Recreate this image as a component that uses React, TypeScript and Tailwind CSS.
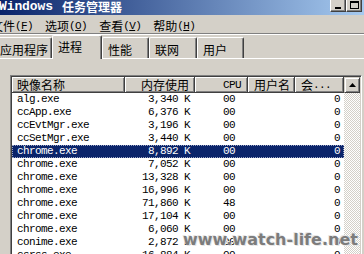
import React from "react";

const MONO = "font-['Liberation_Mono',monospace] text-[11px] tracking-[-0.6px]";

const rows: [string, string, string, string, string][] = [
  ["alg.exe", "3,340 K", "00", "", "0"],
  ["ccApp.exe", "6,376 K", "00", "", "0"],
  ["ccEvtMgr.exe", "3,196 K", "00", "", "0"],
  ["ccSetMgr.exe", "3,440 K", "00", "", "0"],
  ["chrome.exe", "8,892 K", "00", "", "0"],
  ["chrome.exe", "7,052 K", "00", "", "0"],
  ["chrome.exe", "13,328 K", "00", "", "0"],
  ["chrome.exe", "16,996 K", "00", "", "0"],
  ["chrome.exe", "71,860 K", "48", "", "0"],
  ["chrome.exe", "17,104 K", "00", "", "0"],
  ["chrome.exe", "6,060 K", "00", "", "0"],
  ["conime.exe", "2,872 K", "00", "", "0"],
  ["csrss.exe", "16,884 K", "00", "", "0"],
];

function CapBtn({ children }: { children?: React.ReactNode }) {
  return (
    <div className="w-[16px] h-[14px] bg-[#d4d0c8] border border-t-white border-l-white border-r-[#404040] border-b-[#404040] shadow-[inset_-1px_-1px_0_#808080] flex items-center justify-center">
      {children}
    </div>
  );
}

function MenuItem({ label, k }: { label: string; k: string }) {
  return (
    <span className="px-[6px] flex items-center whitespace-nowrap">
      <span>{label}</span>
      <span className={MONO}>
        (<span className="underline">{k}</span>)
      </span>
    </span>
  );
}

function Tab({ label, w, selected }: { label: string; w: string; selected?: boolean }) {
  if (selected) {
    return (
      <div
        className={`${w} h-[24px] mb-[-1px] relative z-10 bg-[#d4d0c8] border-l border-t border-white border-r border-r-[#404040] shadow-[inset_-1px_0_0_#808080] rounded-t-[2px] pl-[5px] pt-[5px] text-[12px] leading-[12px]`}
      >
        {label}
      </div>
    );
  }
  return (
    <div
      className={`${w} h-[21px] border-l border-t border-white border-r border-r-[#404040] shadow-[inset_-1px_0_0_#808080] rounded-t-[2px] pl-[5px] pt-[6px] text-[12px] leading-[12px]`}
    >
      {label}
    </div>
  );
}

const headCell =
  "h-full flex items-center bg-[#d4d0c8] border-r border-b border-[#404040] shadow-[inset_1px_1px_0_#fff,inset_-1px_-1px_0_#808080] text-[12px] leading-[12px] whitespace-nowrap";

export default function App() {
  return (
    <div className="relative w-[364px] h-[254px] overflow-hidden bg-[#d4d0c8] text-black font-['Noto_Sans_CJK_SC',sans-serif]">
      {/* Title bar */}
      <div className="flex h-[15px] bg-[linear-gradient(to_right,#0a246a,#a6caf0)]">
        <div className="flex items-start ml-[-1px] mt-[1px] text-white font-bold leading-[12px] whitespace-nowrap">
          <span className="font-['Liberation_Mono',monospace] text-[13px] tracking-[-0.1px]">Windows</span>
          <span className="ml-[9px] text-[12px]">任务管理器</span>
        </div>
        <div className="ml-auto mr-[-16px] mt-[-2px] flex">
          <CapBtn>
            <div className="w-[6px] h-[2px] bg-black mt-[6px]" />
          </CapBtn>
          <CapBtn>
            <div className="w-[9px] h-[8px] border border-t-2 border-black mt-[-1px]" />
          </CapBtn>
          <div className="w-[2px]" />
          <CapBtn />
        </div>
      </div>

      {/* Menu bar */}
      <div className="flex h-[18px] items-center pt-[4px] ml-[-15px] text-[12px] leading-[12px]">
        <MenuItem label="文件" k="F" />
        <MenuItem label="选项" k="O" />
        <MenuItem label="查看" k="V" />
        <MenuItem label="帮助" k="H" />
      </div>
      <div className="h-[2px] border-t border-[#808080] border-b border-b-white" />

      {/* Tabs */}
      <div className="flex items-end h-[24px] border-b border-white ml-[-6px]">
        <Tab label="应用程序" w="w-[58px]" />
        <Tab label="进程" w="w-[50px]" selected />
        <Tab label="性能" w="w-[47px]" />
        <Tab label="联网" w="w-[48px]" />
        <Tab label="用户" w="w-[47px]" />
      </div>

      {/* Content */}
      <div className="pl-[10px] pt-[16px]">
        <div className="flex w-[352px] h-[200px] border border-[#808080] border-r-white border-b-white p-[1px] shadow-[inset_1px_1px_0_#404040,inset_-1px_-1px_0_#d4d0c8]">
          <div className="w-[332px] flex flex-col bg-white">
            <div className="flex h-[16px] shrink-0">
              <div className={`${headCell} w-[113px] pl-[5px]`}>映像名称</div>
              <div className={`${headCell} w-[70px] justify-end pr-[5px]`}>内存使用</div>
              <div className={`${headCell} w-[53px] justify-end pr-[6px]`}>
                <span className={MONO}>CPU</span>
              </div>
              <div className={`${headCell} w-[47px] pl-[6px]`}>用户名</div>
              <div className={`${headCell} w-[49px] pl-[6px]`}>
                会<span className={MONO}>...</span>
              </div>
            </div>
            <div className="flex flex-col">
              {rows.map((r, i) => {
                const sel = i === 4;
                return (
                  <div
                    key={i}
                    className={`flex h-[13px] shrink-0 items-center whitespace-nowrap ${MONO} leading-[13px] ${
                      sel
                        ? "bg-[#0a246a] text-white outline-1 outline-dotted outline-[#9aa4c4] -outline-offset-1"
                        : ""
                    }`}
                  >
                    <div className="w-[113px] pl-[5px]">{r[0]}</div>
                    <div className="w-[70px] text-right pr-[5px]">{r[1]}</div>
                    <div className="w-[53px] text-right pr-[13px]">{r[2]}</div>
                    <div className="w-[47px] pl-[6px]">{r[3]}</div>
                    <div className="w-[49px] text-right pr-[4px]">{r[4]}</div>
                  </div>
                );
              })}
            </div>
          </div>
          {/* Scrollbar */}
          <div className="w-[16px] flex flex-col">
            <div className="h-[16px] shrink-0 bg-[#d4d0c8] border border-t-[#d4d0c8] border-l-[#d4d0c8] border-r-[#404040] border-b-[#404040] shadow-[inset_1px_1px_0_#fff,inset_-1px_-1px_0_#808080] flex items-center justify-center">
              <svg width="7" height="4" viewBox="0 0 7 4">
                <polygon points="3.5,0 7,4 0,4" fill="#000" />
              </svg>
            </div>
            <div className="flex-1 bg-[repeating-conic-gradient(#d4d0c8_0%_25%,#ffffff_0%_50%)] bg-[length:2px_2px]" />
          </div>
        </div>
      </div>

      {/* Watermark */}
      <div className="absolute left-[183px] top-[232px] font-['DejaVu_Sans',sans-serif] font-bold text-[16px] leading-[16px] text-[#7c7c7c] whitespace-nowrap [text-shadow:1px_1px_0_#e6e6e6,-1px_-1px_0_#e6e6e6]">
        www.watch-life.net
      </div>
    </div>
  );
}
